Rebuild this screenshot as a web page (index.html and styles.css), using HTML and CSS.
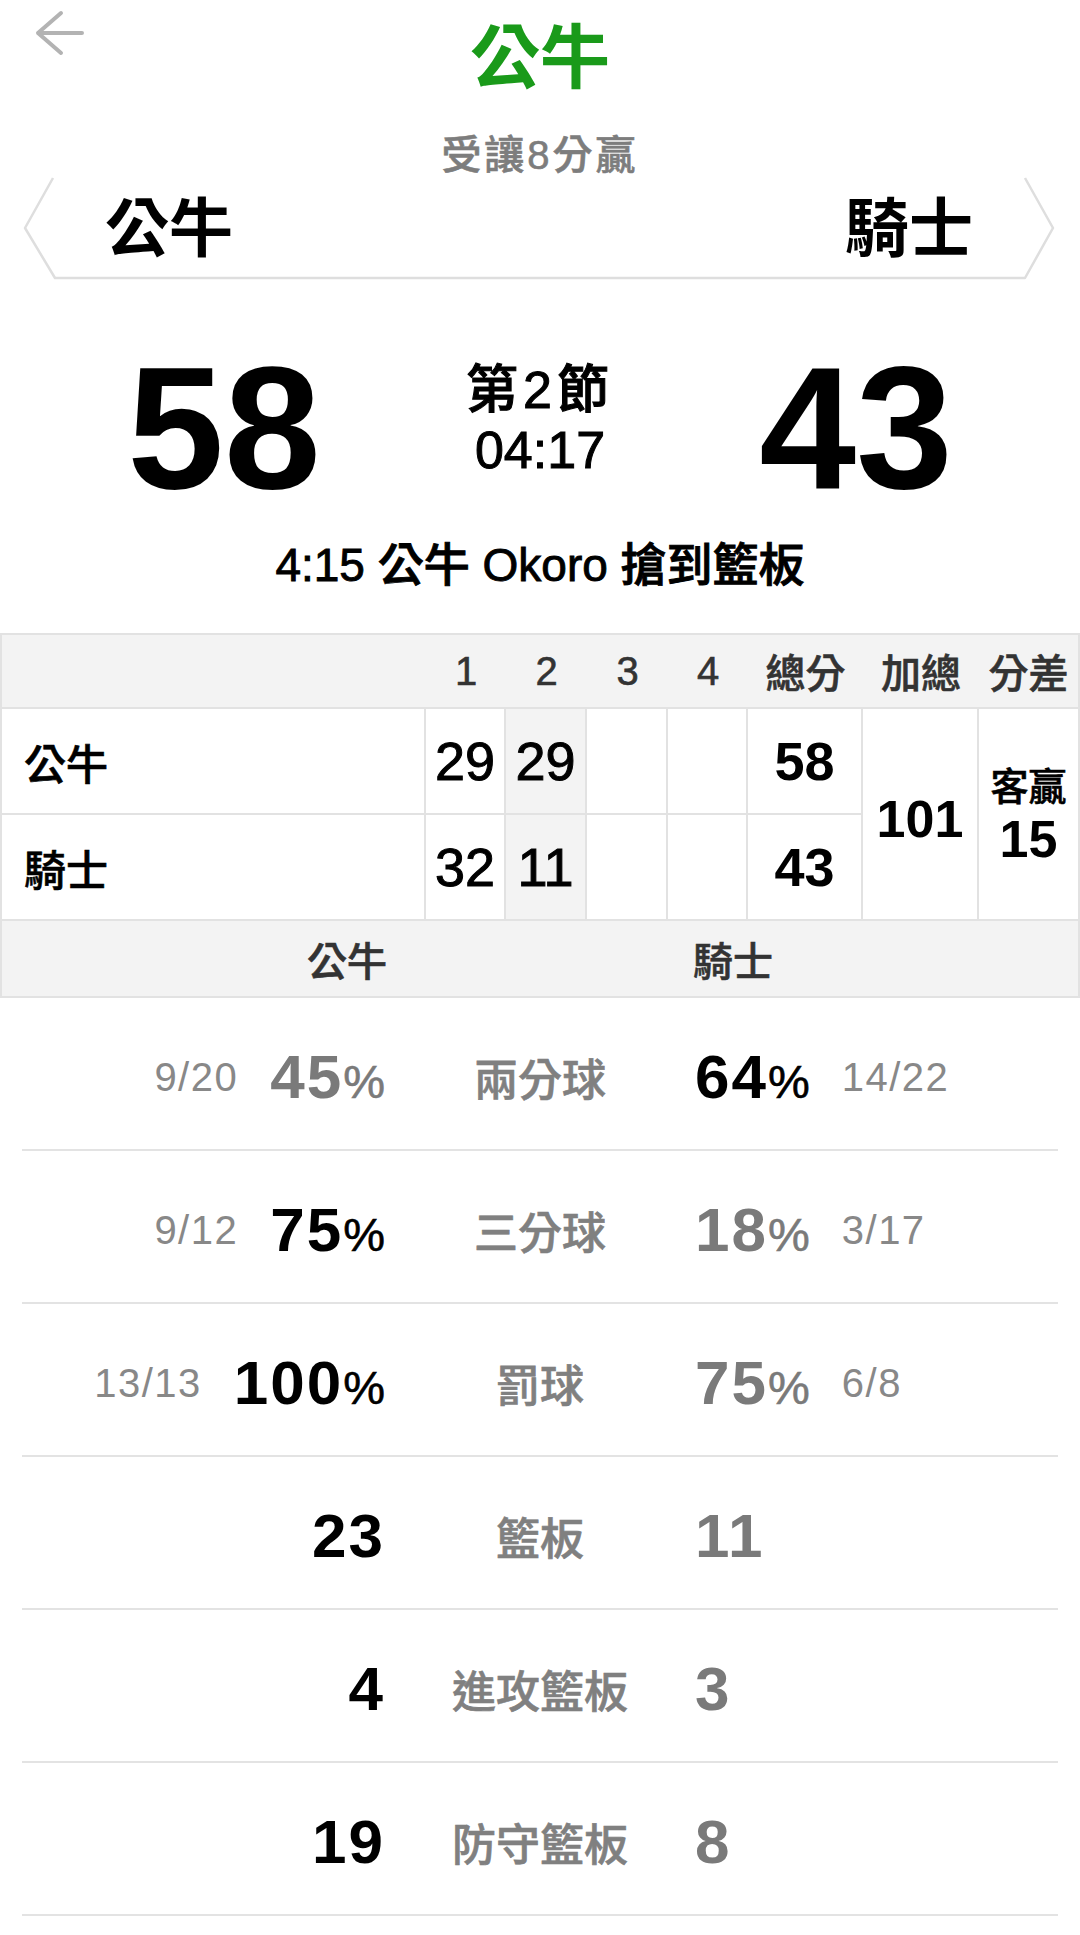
FILE: index.html
```html
<!DOCTYPE html>
<html lang="zh-Hant">
<head>
<meta charset="utf-8">
<title>公牛 vs 騎士</title>
<link rel="stylesheet" href="styles.css">
</head>
<body>
<div class="page">
  <header class="nav">
    <div class="nav-left">
      <svg class="back" viewBox="0 0 52 48" aria-hidden="true">
        <path d="M28 4 L5 24 L28 44 M5 24 H49" fill="none" stroke="#b3b3b3" stroke-width="4" stroke-linecap="round" stroke-linejoin="round"/>
      </svg>
    </div>
    <h1 class="title">公牛</h1>
    <div class="nav-right"></div>
  </header>

  <p class="handicap">受讓8分贏</p>

  <div class="teams">
    <svg class="teams-frame" viewBox="0 0 1080 103" preserveAspectRatio="none" aria-hidden="true">
      <polyline points="53,1 25,51 55,101 1025,101 1053,51 1025,1" fill="none" stroke="#dedede" stroke-width="2.5" stroke-linejoin="round"/>
    </svg>
    <span class="team-name">公牛</span>
    <span class="team-name">騎士</span>
  </div>

  <div class="scoreboard">
    <div class="big-score">58</div>
    <div class="period">
      <div class="period-q">第2節</div>
      <div class="period-t">04:17</div>
    </div>
    <div class="big-score">43</div>
  </div>

  <p class="play">4:15 公牛 Okoro 搶到籃板</p>

  <section class="box">
    <div class="box-head">
      <span></span><span>1</span><span>2</span><span>3</span><span>4</span><span>總分</span><span>加總</span><span>分差</span>
    </div>
    <div class="box-body">
      <div class="cell team">公牛</div>
      <div class="cell q">29</div>
      <div class="cell q cur">29</div>
      <div class="cell q"></div>
      <div class="cell q"></div>
      <div class="cell tot">58</div>
      <div class="cell sum">101</div>
      <div class="cell diff"><span class="diff-label">客贏</span><span class="diff-num">15</span></div>
      <div class="cell team">騎士</div>
      <div class="cell q">32</div>
      <div class="cell q cur">11</div>
      <div class="cell q"></div>
      <div class="cell q"></div>
      <div class="cell tot">43</div>
    </div>
    <div class="box-foot"><span>公牛</span><span>騎士</span></div>
  </section>

  <section class="stats">
    <div class="stat">
      <div class="side l"><span class="frac">9/20</span><span class="pct lose">45<small>%</small></span></div>
      <div class="label">兩分球</div>
      <div class="side r"><span class="pct win">64<small>%</small></span><span class="frac">14/22</span></div>
    </div>
    <div class="stat">
      <div class="side l"><span class="frac">9/12</span><span class="pct win">75<small>%</small></span></div>
      <div class="label">三分球</div>
      <div class="side r"><span class="pct lose">18<small>%</small></span><span class="frac">3/17</span></div>
    </div>
    <div class="stat">
      <div class="side l"><span class="frac">13/13</span><span class="pct win">100<small>%</small></span></div>
      <div class="label">罰球</div>
      <div class="side r"><span class="pct lose">75<small>%</small></span><span class="frac">6/8</span></div>
    </div>
    <div class="stat">
      <div class="side l"><span class="pct win">23</span></div>
      <div class="label">籃板</div>
      <div class="side r"><span class="pct lose">11</span></div>
    </div>
    <div class="stat">
      <div class="side l"><span class="pct win">4</span></div>
      <div class="label">進攻籃板</div>
      <div class="side r"><span class="pct lose">3</span></div>
    </div>
    <div class="stat">
      <div class="side l"><span class="pct win">19</span></div>
      <div class="label">防守籃板</div>
      <div class="side r"><span class="pct lose">8</span></div>
    </div>
  </section>
</div>
</body>
</html>
```

FILE: styles.css
```css
* {
  box-sizing: border-box;
  margin: 0;
  padding: 0;
}

body {
  margin: 0;
  background: #ffffff;
  font-family: "Liberation Sans", "Noto Sans CJK TC", sans-serif;
  color: #000000;
}

.page {
  width: 1080px;
}

/* nav */
.nav {
  display: grid;
  grid-template-columns: 1fr auto 1fr;
  height: 118px;
}

.nav-left {
  padding: 9px 0 0 33px;
}

.back {
  display: block;
  width: 52px;
  height: 48px;
}

.title {
  font-size: 70px;
  line-height: 118px;
  font-weight: 600;
  color: #1a9a1a;
}

.handicap {
  text-align: center;
  font-size: 40px;
  line-height: 40px;
  padding-top: 17px;
  letter-spacing: 3px;
  color: #7d7d7d;
  font-weight: 500;
  -webkit-text-stroke: 0.6px #7d7d7d;
}

/* team bar */
.teams {
  position: relative;
  height: 103px;
  margin-top: 2px;
  display: flex;
  justify-content: space-between;
  align-items: center;
  padding: 0 107px 0 105px;
}

.teams-frame {
  position: absolute;
  left: 0;
  top: 0;
  width: 100%;
  height: 100%;
}

.team-name {
  font-size: 64px;
  line-height: 1;
  font-weight: 700;
}

/* scoreboard */
.scoreboard {
  display: grid;
  grid-template-columns: 448px 184px 448px;
  margin-top: 61px;
}

.big-score {
  font-size: 174px;
  line-height: 174px;
  font-weight: 700;
  text-align: center;
}

.period {
  padding-top: 19px;
  text-align: center;
  font-size: 52px;
  line-height: 60px;
  font-weight: 500;
  -webkit-text-stroke: 1px #000000;
}

.period-q {
  letter-spacing: 5px;
}

.play {
  text-align: center;
  font-size: 46px;
  line-height: 60px;
  font-weight: 500;
  margin-top: 20px;
  -webkit-text-stroke: 0.9px #000000;
}

/* box score */
.box {
  margin-top: 38px;
  border: 2px solid #e2e2e2;
}

.box-head {
  display: grid;
  grid-template-columns: 424px 80px 81px 81px 80px 115px 116px 1fr;
  height: 74px;
  align-items: center;
  text-align: center;
  background: #f3f3f3;
  border-bottom: 2px solid #e2e2e2;
  font-size: 40px;
  color: #333333;
  font-weight: 500;
  -webkit-text-stroke: 0.6px #333333;
}

.box-body {
  display: grid;
  grid-template-columns: 422px 78px 79px 79px 78px 113px 114px 1fr;
  grid-template-rows: 104px 104px;
  gap: 2px;
  background: #e2e2e2;
  border-bottom: 2px solid #e2e2e2;
}

.cell {
  background: #ffffff;
  display: flex;
  align-items: center;
  justify-content: center;
}

.cell.team {
  justify-content: flex-start;
  padding-left: 22px;
  font-size: 42px;
  font-weight: 500;
  -webkit-text-stroke: 0.6px #000000;
}

.cell.q {
  font-size: 54px;
  -webkit-text-stroke: 1px #000000;
}

.cell.cur {
  background: #f3f3f3;
}

.cell.tot {
  font-size: 54px;
  font-weight: 700;
}

.cell.sum {
  grid-row: span 2;
  font-size: 52px;
  font-weight: 700;
  padding-top: 10px;
}

.cell.diff {
  grid-row: span 2;
  flex-direction: column;
  padding-top: 8px;
}

.diff-label {
  font-size: 38px;
  line-height: 42px;
  font-weight: 500;
  -webkit-text-stroke: 0.6px #000000;
}

.diff-num {
  font-size: 52px;
  line-height: 62px;
  font-weight: 700;
}

.box-foot {
  height: 75px;
  display: flex;
  justify-content: center;
  align-items: center;
  gap: 306px;
  background: #f3f3f3;
  font-size: 40px;
  color: #333333;
  font-weight: 500;
  -webkit-text-stroke: 0.6px #333333;
}

/* stats */
.stat {
  margin: 0 22px;
  height: 153px;
  border-bottom: 2px solid #e3e3e3;
  display: grid;
  grid-template-columns: 363px 310px 363px;
  align-items: center;
  padding-top: 6px;
}

.side {
  display: flex;
  align-items: center;
  gap: 32px;
}

.side.l {
  justify-content: flex-end;
}

.side.r {
  justify-content: flex-start;
}

.frac {
  font-size: 40px;
  line-height: 1;
  letter-spacing: 1.5px;
  color: #888888;
}

.pct {
  font-size: 62px;
  line-height: 1;
  font-weight: 700;
  letter-spacing: 2px;
}

.pct small {
  font-size: 47px;
  font-weight: 400;
  letter-spacing: 0;
  -webkit-text-stroke: 0.6px currentColor;
}

.win {
  color: #000000;
}

.lose {
  color: #7a7a7a;
}

.label {
  text-align: center;
  font-size: 44px;
  color: #808080;
  font-weight: 500;
  -webkit-text-stroke: 0.6px #808080;
}
```
